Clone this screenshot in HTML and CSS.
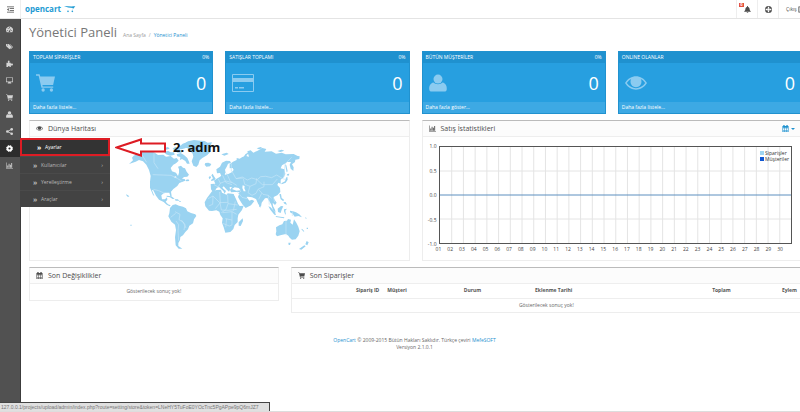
FILE: index.html
```html
<!DOCTYPE html>
<html lang="tr">
<head>
<meta charset="utf-8">
<title>Yönetici Paneli</title>
<link rel="stylesheet" href="styles.css">
</head>
<body>
<svg class="sprite" aria-hidden="true">
  <symbol id="cart" viewBox="0 0 16 16"><path d="M0 1h3l.6 2H16l-1.600 7H5.400l.3 1.300h8.800v1.200H4.600L2.200 2.300H0z"/><circle cx="6" cy="14.300" r="1.400"/><circle cx="13" cy="14.300" r="1.400"/></symbol>
  <symbol id="user" viewBox="0 0 16 16"><circle cx="8" cy="4.500" r="4"/><path d="M4 7.500C1 8 0 11 .2 13.500c0 1.500 1 2 2 2h11.600c1 0 2-.5 2-2C16 11 15 8 12 7.500c-2 2-6 2-8 0z"/></symbol>
  <symbol id="eye" viewBox="0 0 16 16"><path fill-rule="evenodd" d="M0 8c4-6.500 12-6.500 16 0-4 6.500-12 6.500-16 0zm1.300 0c3.400 5 10 5 13.400 0-1-1.400-2-2.300-3.200-2.900a4 4 0 1 1-7 0C3.300 5.700 2.300 6.600 1.300 8z"/></symbol>
  <symbol id="chart" viewBox="0 0 16 16"><path d="M0 1h1.200v12.800H16V15H0zM3 8h2v5H3zM6 4h2v9H6zM9 6h2v7H9zM12 2h2v11h-2z"/></symbol>
  <symbol id="calendar" viewBox="0 0 16 16"><path fill-rule="evenodd" d="M1 2h2V0h3v2h4V0h3v2h2v14H1zm1.500 4v2.300h2.800V6zm4 0v2.300h3V6zm4.200 0v2.300h2.800V6zM2.500 9.300v2.200h2.800V9.300zm4 0v2.200h3V9.300zm4.200 0v2.200h2.800V9.300zM2.500 12.500v2.200h2.800v-2.200zm4 0v2.200h3v-2.200zm4.200 0v2.200h2.800v-2.200z"/></symbol>
</svg>

<header class="topbar">
  <button class="toggle" aria-label="Menü"><svg viewBox="0 0 16 16"><path d="M0 1h16v2H0zM6 5h10v2H6zM6 9h10v2H6zM0 13h16v2H0zM4 4.500v7L0 8z"/></svg></button>
  <a class="logo" href="#"><span>opencart</span><svg viewBox="0 0 36 24"><path d="M0 3c11 1 20 2 34 1-3 4-6 7-9 10 1-3 2-4 2-5-9 0-20-2-27-6z"/><circle cx="12" cy="19" r="2.500"/><circle cx="25" cy="19" r="2.500"/></svg></a>
  <nav class="tools">
    <a href="#" aria-label="Bildirimler"><span class="badge">0</span><svg viewBox="0 0 16 16"><path d="M7 0h2v2c3 .5 4 3 4 6 0 2 1 3 3 5H0c2-2 3-3 3-5 0-3 1-5.500 4-6zM6 14h4c0 2.500-4 2.500-4 0z"/></svg></a>
    <a href="#" aria-label="Yardım"><svg viewBox="0 0 16 16"><circle cx="8" cy="8" r="5.500" fill="none" stroke="currentColor" stroke-width="5"/><path d="M8 1.500v4M8 10.500v4M1.500 8h4M10.500 8h4" stroke="#fff" stroke-width="3"/></svg></a>
    <a class="logout" href="#">Çıkış <svg viewBox="0 0 16 16"><path d="M6 1H1v14h5v-2H3V3h3zM6 6h4V3l6 5-6 5v-3H6z"/></svg></a>
  </nav>
</header>

<div class="shell">
  <nav class="side">
    <a href="#" aria-label="Panel"><svg viewBox="0 0 16 16"><path fill-rule="evenodd" d="M1.500 14A8 8 0 1 1 14.500 14zM2 9v2h2V9zm2-4v2h2V5zm3-2v2h2V3zm5 2-4 5a1.800 1.800 0 1 0 1.500.8zm0 4v2h2V9z"/></svg></a>
    <a href="#" aria-label="Katalog"><svg viewBox="0 0 16 16"><path fill-rule="evenodd" d="M0 2h6l7 7-5 5-8-7zm2 1.500v2h2v-2zM8 2h1l7 7-5 5-1-.8L14 9z"/></svg></a>
    <a href="#" aria-label="Eklentiler"><svg viewBox="0 0 16 16"><path d="M1 6h4c-2-3 0-5 1.500-5S9 3 7.500 6H11v3c3-2 5 0 5 1.500S14 14 11 12v4H8c1-3-4-3-3 0H1z"/></svg></a>
    <a href="#" aria-label="Tasarım"><svg viewBox="0 0 16 16"><path fill-rule="evenodd" d="M0 1h16v11h-5v1.500h1V15H4v-1.500h1V12H0zm1.500 1.500v8h13v-8z"/></svg></a>
    <a href="#" aria-label="Satışlar"><svg><use href="#cart"/></svg></a>
    <a href="#" aria-label="Müşteriler"><svg><use href="#user"/></svg></a>
    <a href="#" aria-label="Pazarlama"><svg viewBox="0 0 16 16"><path d="M3 8l10-5M3 8l10 5" stroke="currentColor" stroke-width="2"/><circle cx="3" cy="8" r="3"/><circle cx="13" cy="3" r="3"/><circle cx="13" cy="13" r="3"/></svg></a>
    <a class="active" href="#" aria-label="Sistem"><svg viewBox="0 0 16 16"><circle cx="8" cy="8" r="4.500" fill="none" stroke="currentColor" stroke-width="4"/><circle cx="8" cy="8" r="7" fill="none" stroke="currentColor" stroke-width="2" stroke-dasharray="3.500 2"/></svg></a>
    <a href="#" aria-label="Raporlar"><svg><use href="#chart"/></svg></a>
    <ul class="submenu">
      <li class="marked"><a href="#"><b>»</b>Ayarlar</a></li>
      <li><a href="#"><b>»</b>Kullanıcılar<i>›</i></a></li>
      <li><a href="#"><b>»</b>Yerelleştirme<i>›</i></a></li>
      <li><a href="#"><b>»</b>Araçlar<i>›</i></a></li>
    </ul>
    <div class="callout">
      <svg viewBox="0 0 52 19"><path d="M1.500 9.500 26 1.500v4h24v8H26v4z"/></svg>
      <strong>2. adım</strong>
    </div>
  </nav>

  <main>
    <div class="heading">
      <h1>Yönetici Paneli</h1>
      <nav class="crumbs"><a href="#">Ana Sayfa</a><span>/</span><a class="here" href="#">Yönetici Paneli</a></nav>
    </div>

    <section class="tiles">
      <article class="tile"><header><span>TOPLAM SİPARİŞLER</span><span>0%</span></header><div><svg class="trolley"><use href="#cart"/></svg><strong>0</strong></div><a href="#">Daha fazla listele...</a></article>
      <article class="tile"><header><span>SATIŞLAR TOPLAMI</span><span>0%</span></header><div><svg viewBox="0 0 22 18"><path fill-rule="evenodd" d="M1 0h20q1 0 1 1v16q0 1-1 1H1q-1 0-1-1V1q0-1 1-1zM1 4h20V1H1zm0 4v9h20V8zM3 13h3v1.500H3zm4 0h5v1.500H7z"/></svg><strong>0</strong></div><a href="#">Daha fazla listele...</a></article>
      <article class="tile"><header><span>BÜTÜN MÜŞTERİLER</span><span>0%</span></header><div><svg class="person"><use href="#user"/></svg><strong>0</strong></div><a href="#">Daha fazla göster...</a></article>
      <article class="tile"><header><span>ONLINE OLANLAR</span></header><div><svg><use href="#eye"/></svg><strong>0</strong></div><a href="#">Daha fazla listele...</a></article>
    </section>

    <section class="row">
      <article class="panel half">
        <h2><svg><use href="#eye"/></svg>Dünya Haritası</h2>
        <div class="map">
          <svg viewBox="30 30 570 336" role="img" aria-label="Dünya Haritası">
            <g class="land">
              <path d="M92 66l18-5 22 6 12 8 16-1 8 6 14-2 10 8 8-2 6 8-8 8-8 4-8 10 4 10 12 4 6 10 3-10 0-10-3-8 9-3 6 6 6 2 5 10 7 9-5 6-10 1-6 5 8 1 2 5-10 4-8 3-6 9-12 9-7 8 2 14-4 0-3-11-15 0-9 8 2 12 9 0 6-6 1 7-5 6 7 8 8 3-3 3-9-5-9-8-14-7-9-12-9-18-3 2 7 17-4-3-9-22 0-18 2-17-5-18-8-16-10-10-12-4-10 5-20 7 12-11-3-8 5-6z"/>
              <path d="M162 66l12-4 8 5 10 0 2 7-14 3-12-4zM188 56l8-5 6 3 4-8 8 4-4 10 10 2-6 6-12 0zM200 73l12-4 10 6 10 9 4 9 3 8-8 0-5-8-10-6-6 3 1-9-9-2zM204 54l14-13 18-6 10 3-14 7-6 10-12 3zM163 54l11-3 5 5-11 3zM226 150l9-2 3 5-9 1z"/>
              <path d="M220 43l14-9 18-4 20 2 12 1 9 5 13-1-4 9 2 7-5 4 1 10-9 9-14 8-8 7-4 13-6 7-9-4-5-13 5-14-2-9-8-9-7-7-8-2z"/>
              <path d="M286 99l9-1 9 4-4 7-11 1-5-6zM170 197l14 2 10 7-6 1-8-5-10-2zM194 208l9 0 6 4-12 0zM208 213l4 0 0 3-4 0z"/>
              <path d="M180 234l8-9 9-2 10 4 12 3 9 5 4 9 11 5 13 4 3 5-7 10-3 12-11 7-4 11-8 8-7 10-8 5-1 9-5 9 0 9 12 8-11 0-9-10-2-24 3-22-3-16-11-9-9-16 3-9z"/>
              <path d="M306 184l14-4 13-1 3 9 14 6 3-4 18 2 7 15 6 14 5 7 12-1-5 13-11 14-2 11 0 11-9 9-4 12-9 9-15 2-5-16-5-14 2-13-7-10-3-10-9-4-13 2-9-1-11-13-2-12 7-13zM398 265l1 8-7 15-6-1 0-10z"/>
              <path d="M303 178l-1-16 14-1-4-9 8-6 9-5 7-5 2-10 5 7 12-1 10-5 6-7-3-6-9 1 0-12 10-8 11-5 0-6 9 2 8-5 11-3 9 2-5-16 10-3 8 7 13-6 14-8 12 3-5 8 21-1 13 7 17-3 12 5 24-1 12 6 6 1-1 8-12 2-1 7-9 7 5 9-1 11-8-7-3-12 4-8-12 0-7 5-8 5-4 9 11 3 3 14-6 11-8 6 0 12-7-3-3 7 8 9 1 12-9 10-11 5 2 7 7 10-5 7-7-7 1 10 6 11 2 9-8-7-5-17-7-12-5-8-7 1-10 13-2 12-8-7-7-16-12-5-12-2-6 1-2-5 12 16 8-3 7 4-10 13-16 8-9-10-9-14-5-9 3-8 0-7-13 0-11 1-3-8 6-7-7-1 1 8-3 6-8-7-8-9-4 4 11 10-4 8-4-8-9-8-4-5-7 4-5 8-6 5z"/>
              <path d="M321 130l-2-12 11-8 6-12 12-6 12 1 3 6-9 2-3 8-6 10 2 9-7 10-6 0-4-9zM303 150l6-5-5-9 4-5 4 8 5 7-4 5-9 2zM296 141l5-3 2 5-5 5zM400 82l6-9 14-9 3 2-12 8-4 10zM334 73l16-5 6 4-13 5zM440 55l12-4 6 4-11 3zM502 63l13-4 8 3-12 4z"/>
              <path d="M525 103l4 3 4 18-3 3zM532 132l6-1-2 6-6-1zM532 140l1 9-6 9-12 5-1-3 11-6 3-11zM508 193l5-1 2 12 7 5-2 5-8-6zM475 229l7 3 13 15 3 8-5-1-12-15zM497 258l14 2 12 2-1 3-24-4zM503 236l10-8 7 1-5 10-3 10-8-3zM522 238l9-2-5 6 2 12-3-2-3-8zM520 217l7-1 4 8-7-2zM540 242l9 2 9 3 10 6 8 9-11-4-11 2-6-9-8-4zM448 222l4 4-1 7-4-4z"/>
              <path d="M498 292l10-6 9-3 5-10 9-1 3-5 9 2-2 9 7 6 4-16 7 10 6 12 4 14-4 13-8 11-11 1-7-6-4-6-7-5-14 3-13 4-4-6 2-9zM535 338l7 0-2 7-4 0zM590 333l6 4-4 9-6-3zM583 346l4 3-13 10-7-2zM585 262l5 2-2 3zM576 296l7 8-2 1-7-7zM590 293l4 0 0 4-4 0zM48 193l5 2 5 4-4 2-4-4zM61 284l4 0 0 3-4 0z"/>
            </g>
            <path class="water" d="M366 177l8-5 12 2 6 7-13 1zM398 166l6 2-1 7 4 9-6 0-4-10zM372 193l6 0 13 25-4 1zM346 132l5-8 0 8-5 4zM192 141l5-2 3 3-4 2z"/>
            <path class="borders" d="M90 65l20 32M128 134l55 2 20 10 12 7M130 178l16 4 18 8M132 68l0 30 12 18M195 245l15 8-3 16 13 8 8 17M182 262l15-12M198 273l8 11-2 18 2 30M214 270l11 14-3 16M294 206l15-8 20 20 24-1M309 198l-1 25-12 5M329 186l2 32-15 18M353 194l1 27-6 18-14 9M330 218l4 22 20 1 26-3M354 221l29 4M338 248l28-3 14 8M366 245l0 40-8 3-20-8M346 266l20 4M350 266l-3 26M376 214l-6 28M338 136l10 22 18 6M325 147l6 13-6 10M312 164l17 9M350 130l11 24 19 12M330 160l18-7 18 5M365 122l13 24 22-2M364 100l0 24M378 146l19-5 15 9 13-6 17 5 10-9 15-1 18 4 15-8 18 11 10 3M400 146l4 17 16 6 18-8 2-16M420 169l-6 19 12 8 12-6 6-12 18-8 0-15M446 179l13 14 16 3 10 9M455 190l-9 18M381 184l15 18 15 4M384 192l9-9M475 196l3 28M490 202l4 14M440 148l17 16 30 0 15-17M528 272l0 44M545 82l-20 20-3 39M547 244l0 14"/>
          </svg>
        </div>
      </article>
      <article class="panel half">
        <h2><svg><use href="#chart"/></svg>Satış İstatistikleri<button class="range" aria-label="Tarih aralığı"><svg><use href="#calendar"/></svg><span class="caret"></span></button></h2>
        <div class="graph">
          <div class="yaxis"><span>1.0</span><span>0.5</span><span>0.0</span><span>-0.5</span><span>-1.0</span></div>
          <div class="plot">
            <svg viewBox="0 0 30 4" preserveAspectRatio="none"><path d="M1 0v4M2 0v4M3 0v4M4 0v4M5 0v4M6 0v4M7 0v4M8 0v4M9 0v4M10 0v4M11 0v4M12 0v4M13 0v4M14 0v4M15 0v4M16 0v4M17 0v4M18 0v4M19 0v4M20 0v4M21 0v4M22 0v4M23 0v4M24 0v4M25 0v4M26 0v4M27 0v4M28 0v4M29 0v4M0 1h30M0 3h30"/><path class="series" d="M0 2h30"/></svg>
            <ul class="legend"><li>Siparişler</li><li class="dark">Müşteriler</li></ul>
          </div>
          <div class="xaxis"><span>01</span><span>02</span><span>03</span><span>04</span><span>05</span><span>06</span><span>07</span><span>08</span><span>09</span><span>10</span><span>11</span><span>12</span><span>13</span><span>14</span><span>15</span><span>16</span><span>17</span><span>18</span><span>19</span><span>20</span><span>21</span><span>22</span><span>23</span><span>24</span><span>25</span><span>26</span><span>27</span><span>28</span><span>29</span><span>30</span></div>
        </div>
      </article>
    </section>

    <section class="row">
      <article class="panel third">
        <h2><svg><use href="#calendar"/></svg>Son Değişiklikler</h2>
        <p>Gösterilecek sonuç yok!</p>
      </article>
      <article class="panel rest">
        <h2><svg><use href="#cart"/></svg>Son Siparişler</h2>
        <table>
          <colgroup><col class="c-id"><col class="c-name"><col class="c-state"><col class="c-date"><col class="c-total"><col class="c-act"></colgroup>
          <thead><tr><th class="right">Sipariş ID</th><th>Müşteri</th><th>Durum</th><th>Eklenme Tarihi</th><th class="right">Toplam</th><th class="right">Eylem</th></tr></thead>
          <tbody><tr><td colspan="6">Gösterilecek sonuç yok!</td></tr></tbody>
        </table>
      </article>
    </section>

    <footer><a href="#">OpenCart</a> © 2009-2015 Bütün Hakları Saklıdır. Türkçe çeviri <a href="#">MefeSOFT</a><br>Versiyon 2.1.0.1</footer>
  </main>
</div>
<div class="status">127.0.0.1/projects/upload/admin/index.php?route=setting/store&amp;token=LNeHY5TuFoE0YOcTnc5PgAPpe9pQ6mJZ7</div>
</body>
</html>
```
FILE: styles.css
```css
* { box-sizing: border-box; }
body {
  margin: 0;
  min-height: 100vh;
  display: flex;
  flex-direction: column;
  overflow: hidden;
  background: #fff;
  border-bottom: 1px solid #ddd;
  color: #666;
  font: 5px/7px "Open Sans", sans-serif;
}
a { color: inherit; text-decoration: none; }
button { border: 0; padding: 0; background: none; color: inherit; font: inherit; }
ul { list-style: none; margin: 0; padding: 0; }
svg { display: block; fill: currentColor; flex: none; }
.sprite { width: 0; height: 0; position: absolute; }

.topbar { height: 19px; display: flex; align-items: stretch; border-bottom: 1px solid #e4e4e4; color: #4c4c4c; overflow: hidden; }
.toggle { width: 21px; display: grid; place-items: center; border-right: 1px solid #eee; }
.toggle svg { width: 7px; height: 7px; }
.logo { display: flex; align-items: center; gap: 3px; margin-left: 4px; color: #1e9bd3; font: bold 8px/16px "Open Sans", sans-serif; }
.logo svg { width: 12px; height: 8px; }
.tools { display: flex; margin-left: auto; margin-right: -8px; }
.tools a { position: relative; width: 21px; display: flex; align-items: center; justify-content: center; border-left: 1px solid #eee; }
.tools svg { width: 7px; height: 7px; }
.tools .logout { width: 30px; gap: 1px; padding-left: 7px; justify-content: flex-start; white-space: nowrap; }
.badge { position: absolute; left: 2px; top: 3px; width: 5px; height: 4px; background: #e3503e; color: #fff; font: bold 4px/4px "Open Sans", sans-serif; text-align: center; }

.shell { flex: 1; display: flex; }
.side { position: relative; width: 21px; flex: none; padding-top: 2px; background: #515151; border-right: 1px solid #3c3c3c; color: #d4d4d4; }
.side > a { height: 17px; padding-right: 2px; display: grid; place-items: center; }
.side > a svg { width: 7px; height: 7px; }
.side .active { background: #2c2c2c; color: #fff; }
.submenu { position: absolute; z-index: 2; left: 20px; top: 119px; width: 90px; background: #434343; color: #bbb; }
.submenu a { height: 17px; display: flex; align-items: center; padding: 0 7px 0 13px; border-top: 1px solid #4a4a4a; }
.submenu b { width: 8px; font-size: 7px; }
.submenu i { margin-left: auto; font-style: normal; font-size: 6px; }
.submenu .marked { border: 2px solid #dd1c24; background: #333; color: #fff; }
.submenu .marked a { height: 14px; border: 0; padding-left: 15px; }
.callout { position: absolute; z-index: 2; left: 115px; top: 119px; display: flex; align-items: center; gap: 6px; white-space: nowrap; color: #111; }
.callout svg { width: 52px; height: 19px; fill: #fff; stroke: #dd1c24; stroke-width: 2; }
.callout strong { font: bold 13px/19px "Open Sans", sans-serif; }

main { flex: 1; min-width: 0; padding: 4px 0 0 8px; overflow: hidden; }
.heading { display: flex; align-items: baseline; gap: 6px; margin-bottom: 10px; }
h1 { margin: 0; font: 13px/18px "Open Sans", sans-serif; color: #777; }
.crumbs { display: flex; gap: 3px; color: #999; }
.here { color: #1e91cf; }

.tiles, .row { display: grid; gap: 12px; margin: 0 -2px 6px 0; }
.tiles { grid-template-columns: repeat(4, 1fr); }
.row { grid-template-columns: repeat(12, 1fr); align-items: start; }
.half { grid-column: span 6; align-self: stretch; }
.third { grid-column: span 4; }
.rest { grid-column: span 8; }

.tile { background: #279fe0; color: #fff; border: 1px solid #2192cf; }
.tile header { display: flex; justify-content: space-between; padding: 2px 3px; background: #1f91cf; height: 11px; }
.tile div { display: flex; align-items: center; justify-content: space-between; height: 39px; padding: 0 6px; }
.tile svg { width: 22px; height: 18px; color: #8bcbf0; }
.tile svg.trolley { width: 19px; height: 19px; }
.tile svg.person { width: 18px; }
.tile svg:not([viewBox]):not([class]) { height: 22px; }
.tile strong { font: 18px/24px "Open Sans", sans-serif; }
.tile > a { display: block; height: 11px; padding: 2px 3px; background: #3da9e4; }

.panel { border: 1px solid #ededed; border-top-color: #bbb; min-width: 0; }
h2 { display: flex; align-items: center; gap: 5px; margin: 0; padding: 0 6px; height: 16px; background: #fcfcfc; border-bottom: 1px solid #eee; font: 7px/15px "Open Sans", sans-serif; color: #4c4c4c; }
h2 svg { width: 7px; height: 7px; }
.range { margin-left: auto; display: flex; align-items: center; gap: 2px; color: #1e91cf; }
.caret { border: 2px solid transparent; border-top-color: currentColor; border-bottom: 0; }
.map { display: flex; justify-content: center; padding: 3px 9px 8px 0; }
.map svg { width: 190px; height: 112px; }
.land { fill: #9ad3f1; }
.water { fill: #fff; }
.map .borders { fill: none; stroke: #c5e6f7; stroke-width: 2; }

.graph { display: grid; grid-template-columns: 16px 1fr; grid-template-rows: 98px auto; padding: 9px 9px 0 0; color: #444; }
.yaxis { display: flex; flex-direction: column; justify-content: space-between; margin: -3px 2px -3px 0; text-align: right; line-height: 6px; }
.plot { position: relative; border: 1px solid #555; }
.plot svg { width: 100%; height: 100%; fill: none; stroke: #e4e4e4; }
.plot path { vector-effect: non-scaling-stroke; stroke-width: 1px; }
.plot .series { stroke: #5c8fbf; }
.legend { position: absolute; right: 2px; top: 3px; line-height: 6px; color: #333; }
.legend li { display: flex; align-items: center; gap: 1px; }
.legend li::before { content: ""; width: 4px; height: 4px; background: #9fd5f1; }
.legend .dark::before { background: #1057d2; }
.xaxis { grid-column: 2; display: grid; grid-template-columns: repeat(30, 1fr); margin: 2px 6px 0 -6px; text-align: center; }

.panel p { margin: 0; padding: 4px 0 5px; text-align: center; }
table { width: 100%; border-collapse: collapse; table-layout: fixed; }
th, td { height: 14px; padding: 0 4px; text-align: left; border-bottom: 1px solid #eee; }
th { color: #555; }
td { text-align: center; }
tbody td { border-bottom: 0; }
.right { text-align: right; }
.c-id { width: 18%; }
.c-name { width: 15%; }
.c-state { width: 14%; }
.c-date { width: 28%; }
.c-total { width: 12%; }
.c-act { width: 13%; }
footer { padding-top: 18px; text-align: center; }
footer a { color: #1e91cf; }

.status { position: fixed; z-index: 3; left: 0; bottom: 1px; width: 270px; height: 9px; padding-left: 1px; overflow: hidden; white-space: nowrap; background: #e0e0e0; border-top: 1px solid #444; border-right: 1px solid #444; font-family: "Liberation Sans", sans-serif; line-height: 8px; color: #777; }
```
